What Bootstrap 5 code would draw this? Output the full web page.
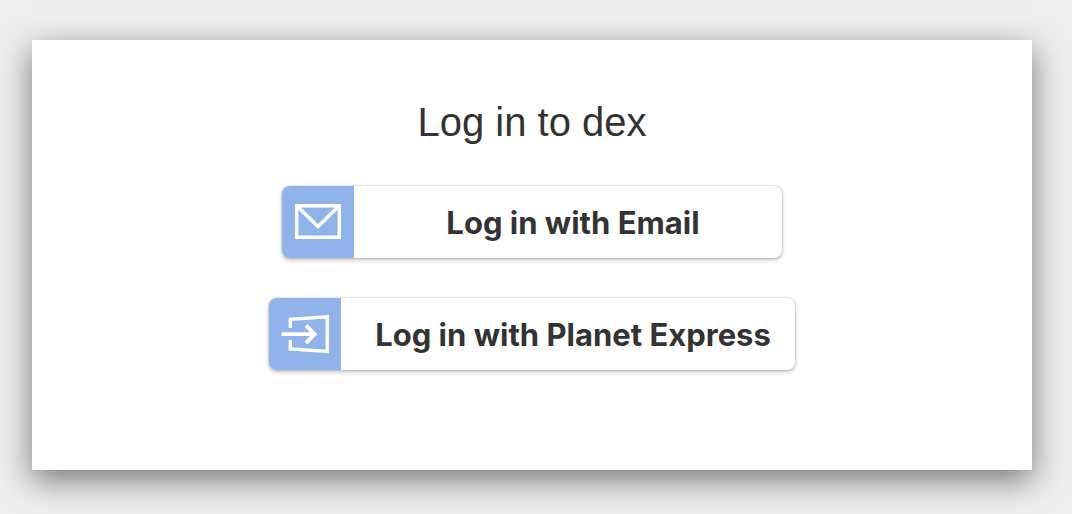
<!DOCTYPE html>
<html lang="en">
<head>
<meta charset="utf-8">
<meta name="viewport" content="width=device-width, initial-scale=1">
<title>dex</title>
<link href="https://cdn.jsdelivr.net/npm/bootstrap@5.3.0/dist/css/bootstrap.min.css" rel="stylesheet">
<style>
body { background: #eee; color: #333; font-family: "Liberation Sans", Arial, sans-serif; }
.page-frame { padding: 40px 40px 44px 32px; }
.login-panel { padding: 58px 24px 100px; box-shadow: 0 10px 30px rgba(0, 0, 0, .5); }
.login-title { font-size: 40px; line-height: 48px; margin-bottom: 40px; }
.btn-provider {
  --bs-btn-color: #333; --bs-btn-hover-color: #333; --bs-btn-bg: #fff; --bs-btn-hover-bg: #f8f8f8;
  min-width: 500px; height: 72px; border: 0; border-radius: 8px;
  font: 700 31px/74px Inter, "Liberation Sans", sans-serif;
  box-shadow: 0 2px 4px rgba(0, 0, 0, .25), 0 0 2px rgba(0, 0, 0, .25);
}
.provider-icon { width: 72px; background: #90b4e9; }
.provider-name { padding: 0 24px 0 34px; }
</style>
</head>
<body>
<div class="page-frame">
  <main class="login-panel bg-white text-center">
    <h1 class="login-title fw-normal">Log in to dex</h1>
    <div class="d-flex flex-column align-items-center" style="gap:40px">
      <button type="button" class="btn btn-provider d-flex p-0 overflow-hidden">
        <span class="provider-icon flex-shrink-0 align-self-stretch">
          <svg class="d-block" width="72" height="72" viewBox="0 0 72 72" fill="none" stroke="#fff" stroke-width="3.4" aria-hidden="true">
            <path d="M14.7 19.7H57.3V51.3H14.7ZM15 20L36 40.5L57 20"/>
          </svg>
        </span>
        <span class="provider-name flex-grow-1 text-nowrap">Log in with Email</span>
      </button>
      <button type="button" class="btn btn-provider d-flex p-0 overflow-hidden">
        <span class="provider-icon flex-shrink-0 align-self-stretch">
          <svg class="d-block" width="72" height="72" viewBox="0 0 72 72" fill="none" stroke="#fff" stroke-width="3.4" aria-hidden="true">
            <path d="M21.3 30V21.3L58.3 18.9V53.4L21.3 51V42"/>
            <path d="M12.5 36.2H45.5M37 27.5L45.7 36.2L37 44.9" stroke-width="3.8"/>
          </svg>
        </span>
        <span class="provider-name flex-grow-1 text-nowrap">Log in with Planet Express</span>
      </button>
    </div>
  </main>
</div>
<script src="https://cdn.jsdelivr.net/npm/bootstrap@5.3.0/dist/js/bootstrap.bundle.min.js"></script>
</body>
</html>
